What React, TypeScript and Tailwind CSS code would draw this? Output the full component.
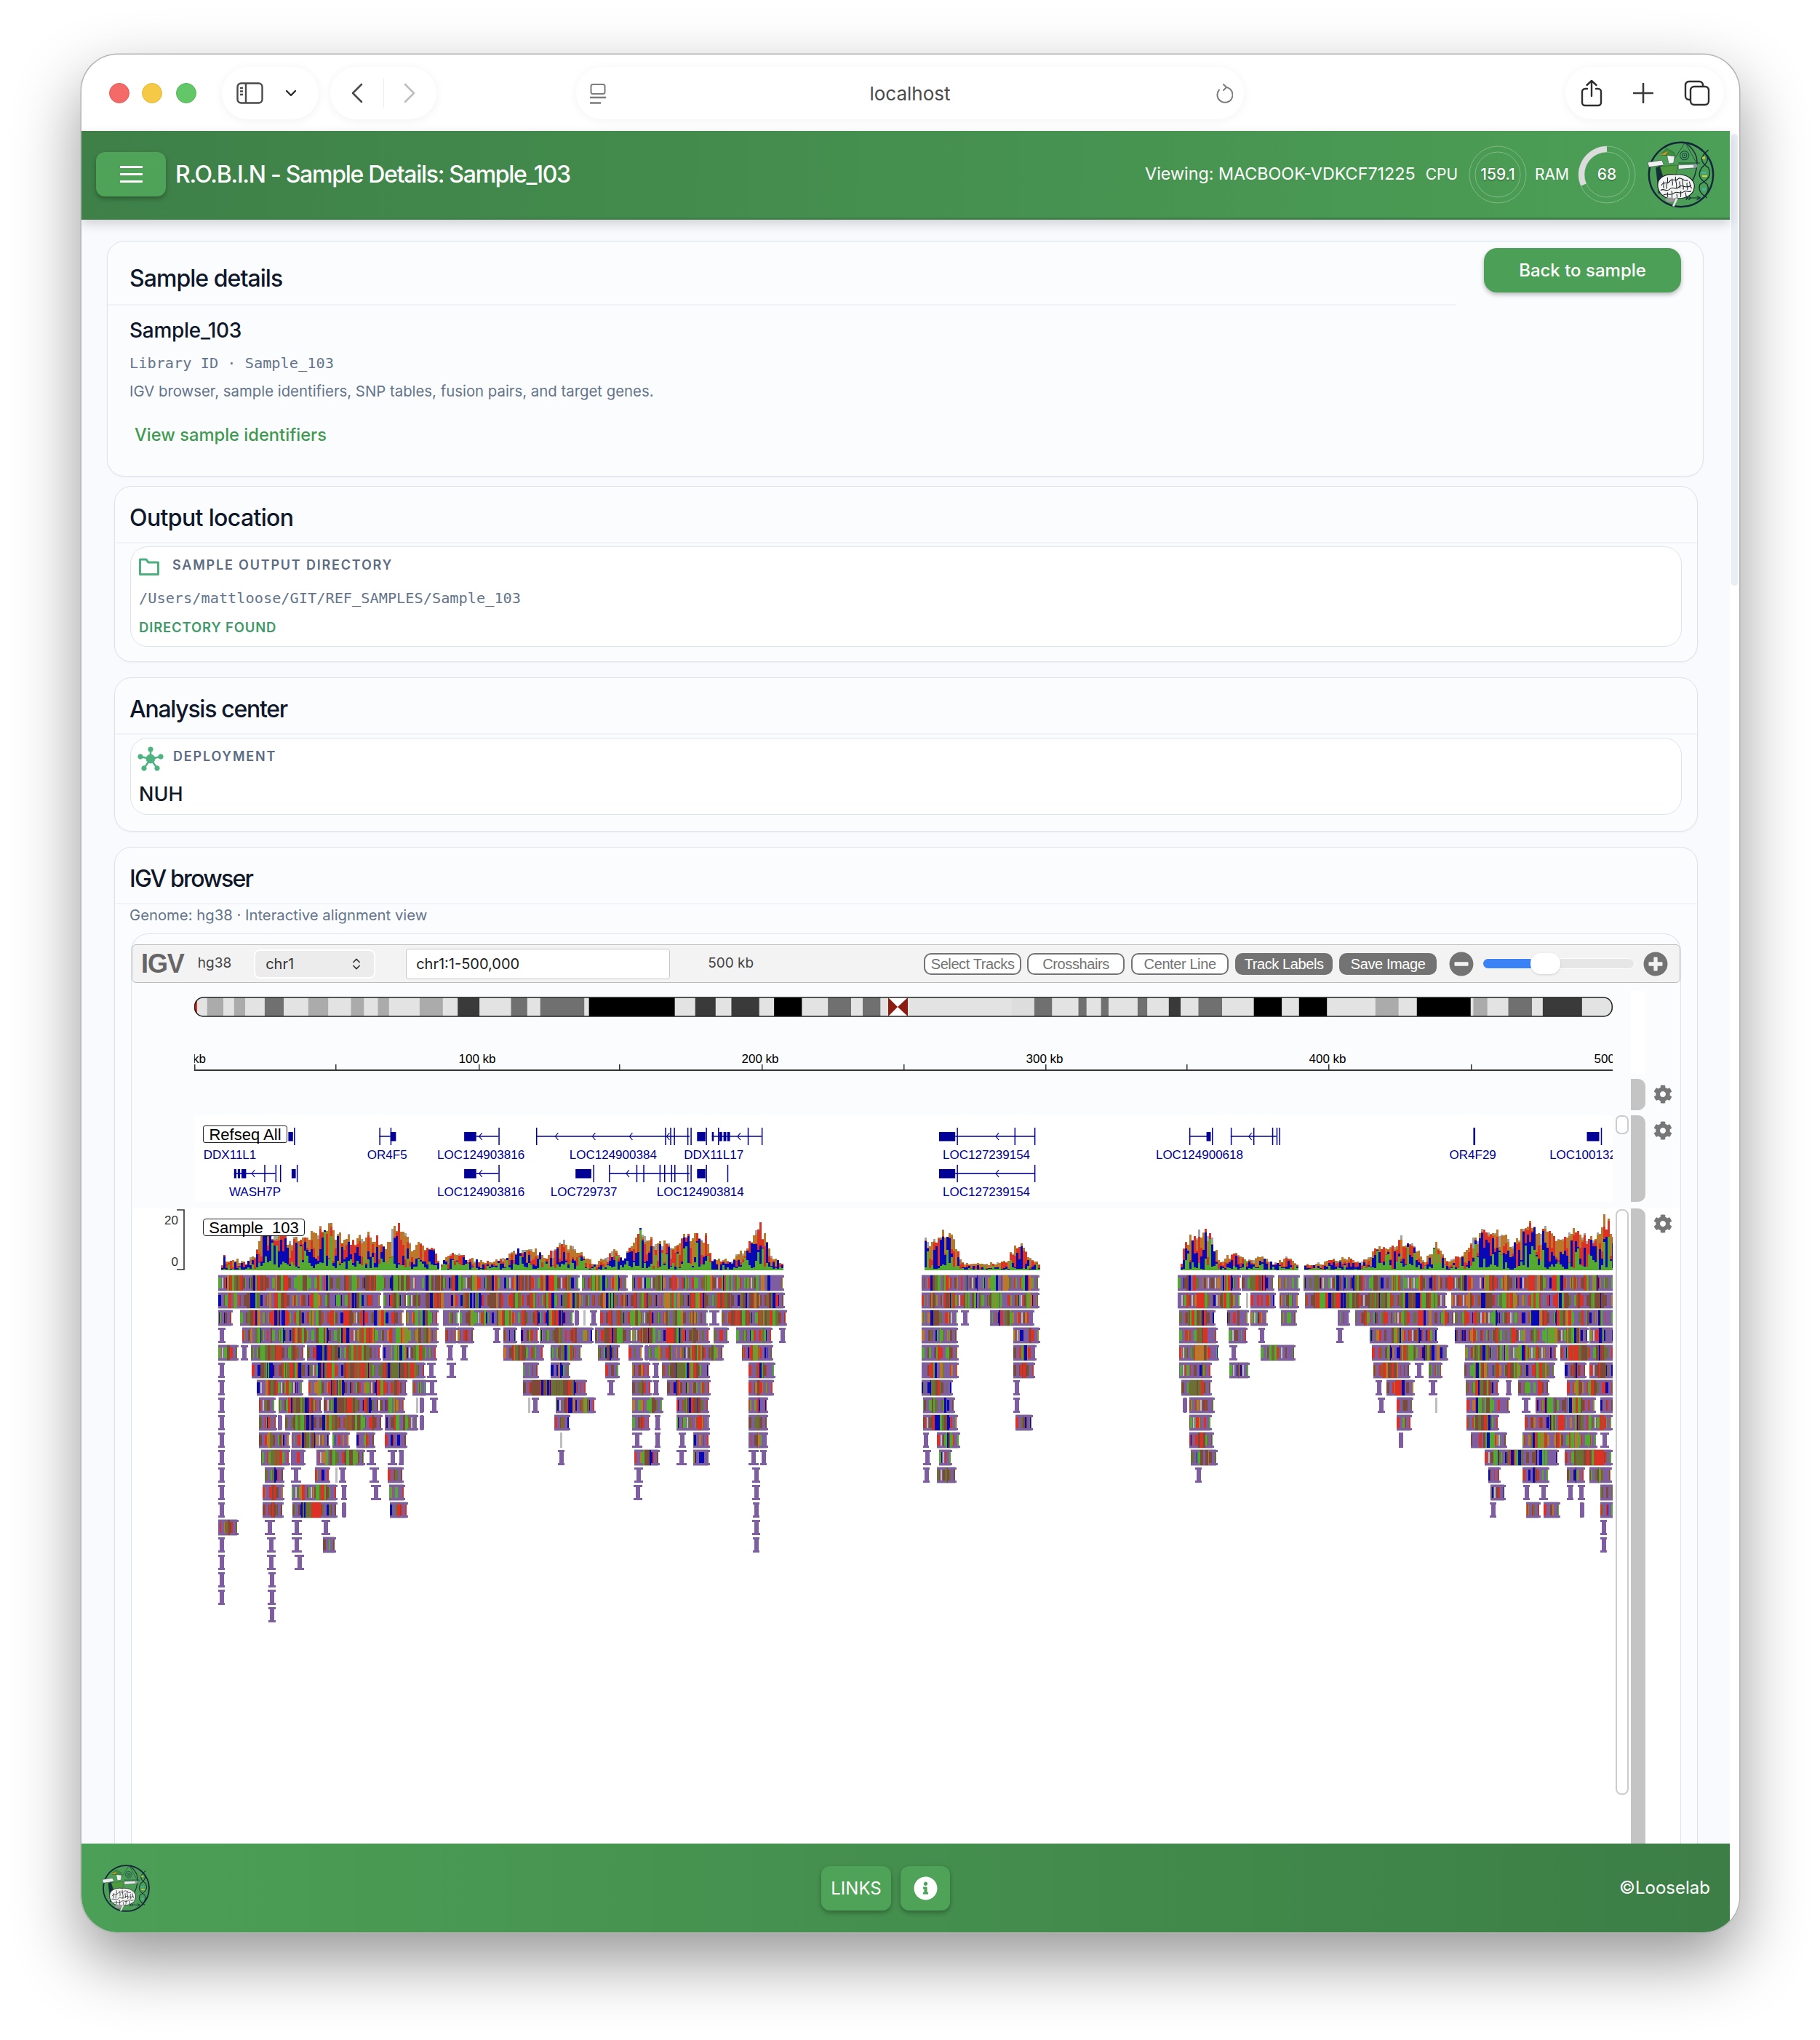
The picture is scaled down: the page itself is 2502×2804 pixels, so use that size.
import { ChevronsUpDown } from 'lucide-react'
import { FaCog, FaInfoCircle, FaMinusCircle, FaPlusCircle } from 'react-icons/fa'

// track svgs share one origin: x = page x - 181
const X0 = 181
const sans = "[font-family:'Liberation_Sans',Arial,sans-serif]"

const mulberry = (seed: number) => () => {
  seed |= 0
  seed = (seed + 0x6d2b79f5) | 0
  let t = Math.imul(seed ^ (seed >>> 15), 1 | seed)
  t = (t + Math.imul(t ^ (t >>> 7), 61 | t)) ^ t
  return ((t ^ (t >>> 14)) >>> 0) / 4294967296
}

const C = {
  red: '#dc3226',
  green: '#54aa30',
  blue: '#0808b4',
  orange: '#bb772a',
  brown: '#7c4a36',
  olive: '#6b7034',
  gray: '#a3a3a3',
  purple: '#7e5da0',
  edge: '#bdbdbd',
  white: '#ffffff',
}
type Col = keyof typeof C

// x positions below were read off crops, so keep the crop's scale here
const lx = (v: number) => 290 + v / 1.96
const rx = (v: number) => 1260 + v / 1.633

const leftRows: number[][] = [
  [20, 990, 1000, 1120, 1135, 1540],
  [20, 455, 465, 525, 530, 1543],
  [20, 55, 78, 515, 525, 610, 625, 665, 670, 975, 980, 990, 1003, 1010, 1022, 1040, 1048, 1335, 1343, 1370, 1375, 1548],
  [20, 40, 85, 610, 632, 660, 665, 705, 760, 780, 788, 822, 835, 880, 885, 1028, 1035, 1130, 1135, 1340, 1355, 1392, 1415, 1510, 1530, 1548],
  [20, 70, 80, 100, 108, 248, 258, 455, 462, 605, 635, 653, 672, 692, 788, 893, 915, 995, 1042, 1097, 1125, 1160, 1170, 1178, 1180, 1378, 1430, 1512],
  [20, 38, 110, 265, 265, 575, 583, 605, 635, 660, 840, 880, 915, 965, 1062, 1097, 1135, 1180, 1190, 1208, 1215, 1340, 1448, 1518],
  [20, 38, 123, 245, 262, 525, 543, 578, 583, 610, 840, 1010, 1068, 1088, 1135, 1183, 1190, 1208, 1228, 1342, 1448, 1513],
  [20, 38, 130, 170, 182, 295, 303, 450, 455, 520, 552, 558, 562, 572, 590, 612, 855, 860, 865, 883, 930, 1033, 1135, 1215, 1255, 1338, 1448, 1498],
  [20, 38, 130, 175, 180, 190, 200, 458, 468, 555, 565, 572, 925, 965, 1135, 1180, 1195, 1212, 1255, 1340, 1448, 1498],
  [20, 38, 130, 210, 218, 318, 328, 370, 392, 440, 468, 525, 940, 946, 1135, 1162, 1195, 1212, 1260, 1280, 1300, 1340, 1448, 1498],
  [20, 38, 135, 210, 215, 250, 285, 412, 420, 445, 477, 502, 505, 520, 935, 952, 1140, 1205, 1255, 1282, 1300, 1340, 1448, 1475, 1480, 1498],
  [20, 38, 145, 195, 215, 243, 280, 318, 335, 342, 345, 365, 428, 452, 477, 515, 1140, 1165, 1458, 1480],
  [20, 38, 140, 195, 218, 338, 350, 367, 432, 458, 480, 520, 1138, 1162, 1458, 1480],
  [20, 38, 140, 192, 220, 338, 355, 362, 482, 528, 1460, 1478],
  [20, 70, 145, 172, 218, 245, 298, 322, 1458, 1480],
  [20, 38, 150, 175, 218, 245, 302, 334, 1460, 1478],
  [20, 38, 150, 175, 225, 250],
  [20, 38, 155, 175],
  [20, 38, 152, 175],
  [155, 175],
]

const rightRows: number[][] = [
  [12, 272, 587, 725, 730, 800, 812, 858, 868, 1563],
  [12, 272, 587, 725, 740, 745, 750, 803, 815, 855, 872, 1188, 1200, 1563],
  [12, 90, 100, 118, 165, 262, 590, 668, 698, 743, 750, 785, 818, 850, 945, 970, 985, 1205, 1208, 1563],
  [12, 90, 218, 275, 590, 672, 700, 740, 768, 782, 942, 958, 1018, 1168, 1208, 1505, 1510, 1563],
  [12, 92, 218, 266, 590, 676, 702, 720, 772, 848, 1022, 1190, 1232, 1435, 1445, 1563],
  [12, 92, 218, 263, 590, 660, 702, 745, 1025, 1105, 1118, 1138, 1150, 1178, 1230, 1430, 1455, 1500, 1510, 1563],
  [12, 78, 218, 232, 595, 660, 1030, 1045, 1055, 1115, 1150, 1170, 1233, 1305, 1322, 1335, 1350, 1418, 1460, 1563],
  [15, 83, 218, 232, 600, 606, 612, 667, 1035, 1052, 1078, 1112, 1165, 1170, 1235, 1330, 1358, 1378, 1390, 1522, 1535, 1563],
  [15, 90, 222, 258, 612, 660, 1078, 1108, 1235, 1305, 1365, 1560],
  [15, 28, 45, 94, 612, 665, 1082, 1092, 1245, 1322, 1360, 1525, 1535, 1555],
  [15, 32, 50, 76, 615, 673, 1275, 1438, 1455, 1560],
  [15, 30, 45, 86, 625, 640, 1283, 1308, 1360, 1418, 1460, 1498, 1510, 1558],
  [1288, 1320, 1362, 1376, 1398, 1418, 1460, 1475, 1485, 1500, 1535, 1563],
  [1286, 1302, 1368, 1398, 1408, 1442, 1490, 1498, 1535, 1563],
  [1535, 1550],
  [1535, 1550],
]

// coverage outline, [crop x, crop y of the top]
const covLeft = [[28, 190], [30, 55], [35, 155], [60, 145], [90, 160], [115, 130], [140, 60], [180, 50], [210, 80], [240, 50], [280, 70], [310, 10], [340, 60], [380, 80], [430, 60], [470, 100], [490, 30], [510, 30], [540, 110], [565, 90], [600, 110], [612, 160]]
const covLeft2 = [[620, 165], [645, 120], [680, 140], [730, 155], [770, 150], [800, 130], [860, 100], [900, 140], [945, 70], [980, 120], [1000, 130], [1030, 165], [1080, 115], [1110, 150], [1150, 40], [1175, 80], [1205, 80], [1240, 105], [1270, 60], [1310, 70], [1335, 70], [1350, 150], [1400, 150], [1450, 90], [1468, 0], [1490, 70], [1510, 140], [1543, 165]]
const covMid = [[18, 60], [30, 110], [50, 70], [65, 50], [85, 100], [100, 175], [150, 175], [200, 165], [225, 85], [240, 125], [275, 180]]
const covRight = [[592, 180], [600, 100], [630, 50], [655, 60], [680, 170], [710, 125], [740, 165], [775, 140], [800, 175], [830, 150], [855, 180]]
const covRight2 = [[870, 185], [950, 155], [1000, 165], [1040, 100], [1060, 120], [1085, 75], [1125, 125], [1140, 165], [1165, 100], [1190, 170], [1235, 120], [1250, 75], [1295, 25], [1330, 100], [1370, 30], [1415, 40], [1445, 100], [1470, 40], [1500, 70], [1520, 70], [1545, 0], [1563, 70]]

const interp = (pts: number[][], x: number) => {
  for (let i = 1; i < pts.length; i++) {
    if (x <= pts[i][0]) {
      const [a, b] = pts[i - 1]
      const [c, d] = pts[i]
      return b + ((d - b) * (x - a)) / (c - a)
    }
  }
  return pts[pts.length - 1][1]
}

const buildTracks = () => {
  const rnd = mulberry(103)
  const paths: Record<string, string[]> = {}
  const rect = (col: Col, x: number, y: number, w: number, h: number) => {
    ;(paths[col] ||= []).push(`M${x - X0} ${y - 1662}h${w}v${h}h${-w}z`)
  }
  const caps: [Col, number, number, number, number][] = []

  const stripeCols: Col[] = ['red', 'green', 'blue', 'orange', 'brown', 'olive', 'purple', 'red', 'green', 'brown']
  const dimCols: Col[] = ['brown', 'olive', 'brown', 'red', 'olive', 'green', 'brown', 'blue', 'red']

  const beam = (x: number, y: number) => {
    caps.push(['purple', x - 6, y, 12, 3], ['purple', x - 6, y + 18, 12, 3], ['purple', x - 2, y, 4, 21])
  }

  const read = (x0: number, x1: number, y: number) => {
    x0 = Math.round(x0)
    x1 = Math.round(x1)
    const w = x1 - x0
    if (w < 4) {
      rect('edge', x0, y, Math.max(w, 3), 21)
      return
    }
    if (w < 15) {
      const c = x0 + Math.round(w / 2)
      const col = stripeCols[Math.floor(rnd() * stripeCols.length)]
      caps.push(['purple', x0, y, w, 3], ['purple', x0, y + 18, w, 3], ['purple', c - 3, y + 1, 6, 19], [col, c - 2, y, 4, 21])
      return
    }
    const dim = rnd() < 0.25
    const cols = dim ? dimCols : stripeCols
    let x = x0
    while (x < x1) {
      const s = Math.min(1 + Math.floor(rnd() * 4), x1 - x)
      rect(cols[Math.floor(rnd() * cols.length)], x, y, s, 21)
      x += s
    }
    let b = x0 + 6
    while (b < x1 - 3) {
      beam(b, y)
      if (rnd() < 0.18) caps.push(['edge', b - 1, y + 3, 2, 15])
      b += dim ? 26 + Math.floor(rnd() * 50) : 8 + Math.floor(rnd() * 30)
    }
    beam(x1 - 4, y)
    caps.push(['edge', x0, y - 1, w, 1], ['edge', x0, y + 21, w, 1])
  }

  leftRows.forEach((segs, r) => {
    const y = 1754 + r * 24
    for (let i = 0; i < segs.length; i += 2) read(lx(segs[i]), lx(segs[i + 1]), y)
  })
  rightRows.forEach((segs, r) => {
    const y = 1754 + r * 24
    for (let i = 0; i < segs.length; i += 2) read(rx(segs[i]), rx(segs[i + 1]), y)
  })

  const cube = () => {
    const v = rnd()
    return v * v * v
  }
  const cov = (pts: number[][], toX: (v: number) => number, scale: number, base: number) => {
    const a = Math.round(toX(pts[0][0]))
    const b = Math.round(toX(pts[pts.length - 1][0]))
    const k = toX(1) - toX(0)
    for (let x = a; x < b; x += 3) {
      const top = interp(pts, (x - toX(0)) / k)
      const h = Math.max(((base - top) / scale) * (0.85 + rnd() * 0.38), 7)
      const order: Col[] = ['green', 'blue', 'red', 'orange', 'gray']
      // one base tends to dominate a column
      const g = rnd()
      const wt = [0.1 + g * g * 0.7, cube() * 2.2, cube() * 1.7, cube() * 1.7, rnd() < 0.35 ? rnd() * 0.25 : 0]
      const sum = wt.reduce((p, c) => p + c, 0)
      let y = 1747
      order.forEach((col, i) => {
        const s = Math.round((h * wt[i]) / sum)
        if (s > 0) {
          y -= s
          rect(col, x, y, 3, s)
        }
      })
    }
  }
  cov(covLeft, lx, 2.8, 187)
  cov(covLeft2, lx, 2.8, 187)
  cov(covMid, rx, 3, 200)
  cov(covRight, rx, 3, 200)
  cov(covRight2, rx, 3, 200)

  caps.forEach(([col, x, y, w, h]) => rect(col, Math.round(x), y, w, h))
  return (['brown', 'olive', 'red', 'green', 'blue', 'orange', 'gray', 'purple', 'edge', 'white'] as Col[]).map((col) => ({
    col,
    d: (paths[col] || []).join(''),
  }))
}

const alignment = buildTracks()

// ideogram bands read from two crops with different scales
const ix1 = (v: number) => 170 + v / 1.568
const ix2 = (v: number) => 1200 + v / 1.352
const L = '#e3e3e3'
const M = '#ababab'
const D = '#707070'
const V = '#3a3a3a'
const K = '#000000'
const bands: [number, number, string][] = [
  ...([
    [152, 180, L], [180, 215, M], [215, 238, L], [238, 262, M], [262, 304, L], [304, 345, D], [345, 398, L], [398, 441, M], [441, 490, L], [490, 518, M],
    [518, 548, L], [548, 572, M], [572, 638, L], [638, 688, M], [688, 720, L], [720, 767, V], [767, 835, L], [835, 870, D], [870, 898, L], [898, 993, D],
    [993, 1003, L], [1003, 1188, K], [1188, 1232, L], [1232, 1276, V], [1276, 1310, L], [1310, 1370, V], [1370, 1402, L], [1402, 1462, K], [1462, 1518, L], [1518, 1568, D],
  ] as [number, number, string][]).map(([a, b, c]) => [ix1(a), ix1(b), c] as [number, number, string]),
  [1170, 1186, L],
  [1186, 1200, D],
  ...([
    [0, 14, D], [14, 28, L], [28, 65, '#ffffff'], [65, 258, L], [258, 300, '#dddddd'], [300, 333, D], [333, 382, L], [382, 397, D], [397, 424, L], [424, 438, D],
    [438, 492, L], [492, 510, D], [510, 550, L], [550, 572, V], [572, 605, L], [605, 649, D], [649, 708, L], [708, 760, K], [760, 792, L], [792, 844, K],
    [844, 934, L], [934, 977, M], [977, 1011, L], [1011, 1111, K], [1111, 1116, L], [1116, 1142, M], [1142, 1181, L], [1181, 1225, D], [1225, 1245, L], [1245, 1318, V], [1318, 1375, L],
  ] as [number, number, string][]).map(([a, b, c]) => [ix2(a), ix2(b), c] as [number, number, string]),
]

const ticks = [267, 461, 658, 851, 1047, 1242, 1437, 1631, 1826, 2022, 2217]
const rulerLabels: [string, number][] = [['0 kb', 267], ['100 kb', 656], ['200 kb', 1045], ['300 kb', 1436], ['400 kb', 1825], ['500 kb', 2217]]

type Gene = { y: number; line?: [number, number]; boxes?: [number, number][]; bars?: number[]; chev?: number[] }
const g1 = 1563
const g2 = 1614
const genes: Gene[] = [
  { y: g1, boxes: [[ix1(355), ix1(365)]], bars: [ix1(367)] },
  { y: g1, line: [ix1(551), ix1(575)], boxes: [[ix1(575), ix1(587)]], bars: [ix1(551), ix1(575)] },
  { y: g1, line: [ix1(760), ix1(808)], boxes: [[ix1(734), ix1(760)]], bars: [ix1(808)], chev: [ix1(768)] },
  { y: g1, line: [ix1(889), ix1(1220)], bars: [ix1(889), ix1(1167), ix1(1178), ix1(1186), ix1(1215), ix1(1222)], chev: [ix1(932), ix1(1012), ix1(1092), ix1(1172)] },
  { y: g1, boxes: [[ix1(1236), ix1(1254)]], bars: [ix1(1255)] },
  {
    y: g1,
    line: [ix1(1268), ix1(1375)],
    boxes: [[ix1(1268), ix1(1272)], [ix1(1284), ix1(1290)], [ix1(1293), ix1(1299)], [ix1(1301), ix1(1307)]],
    bars: [ix1(1281), ix1(1345), ix1(1375)],
    chev: [ix1(1325)],
  },
  { y: g2, line: [ix1(238), ix1(327)], boxes: [[ix1(238), ix1(243)], [ix1(246), ix1(251)], [ix1(254), ix1(264)]], bars: [ix1(303), ix1(327), ix1(337)], chev: [ix1(278)] },
  { y: g2, boxes: [[ix1(362), ix1(371)]], bars: [ix1(373)] },
  { y: g2, line: [ix1(760), ix1(808)], boxes: [[ix1(734), ix1(760)]], bars: [ix1(808)], chev: [ix1(768)] },
  { y: g2, boxes: [[ix1(974), ix1(1008)]], bars: [ix1(1012)] },
  { y: g2, line: [ix1(1046), ix1(1220)], bars: [ix1(1046), ix1(1105), ix1(1120), ix1(1155), ix1(1165), ix1(1180), ix1(1187), ix1(1215), ix1(1222)], chev: [ix1(1085)] },
  { y: g2, boxes: [[ix1(1236), ix1(1254)]], bars: [ix1(1255), ix1(1301)] },
  { y: g1, line: [ix2(153), ix2(300)], boxes: [[ix2(123), ix2(153)]], bars: [ix2(156), ix2(263), ix2(300)], chev: [ix2(230)] },
  { y: g2, line: [ix2(153), ix2(300)], boxes: [[ix2(123), ix2(153)]], bars: [ix2(156), ix2(300)], chev: [ix2(230)] },
  { y: g1, line: [ix2(588), ix2(625)], boxes: [[ix2(620), ix2(628)]], bars: [ix2(588), ix2(630)] },
  { y: g1, line: [ix2(665), ix2(750)], bars: [ix2(665), ix2(707), ix2(742), ix2(750), ix2(755)], chev: [ix2(700)] },
  { y: g1, bars: [ix2(1116), ix2(1117.5)] },
  { y: g1, boxes: [[ix2(1327), ix2(1350)]], bars: [ix2(1353)] },
]

const geneLabels: [string, number, number][] = [
  ['DDX11L1', ix1(229), 1588],
  ['OR4F5', ix1(568), 1588],
  ['LOC124903816', ix1(770), 1588],
  ['LOC124900384', ix1(1055), 1588],
  ['DDX11L17', ix1(1272), 1588],
  ['WASH7P', ix1(283), 1639],
  ['LOC124903816', ix1(770), 1639],
  ['LOC729737', ix1(992), 1639],
  ['LOC124903814', ix1(1243), 1639],
  ['LOC127239154', ix2(211), 1588],
  ['LOC127239154', ix2(211), 1639],
  ['LOC124900618', ix2(607), 1588],
  ['OR4F29', ix2(1115), 1588],
  ['LOC100132', 2130 + 46, 1588],
]

const Logo = ({ className }: { className: string }) => (
  <svg viewBox="0 0 100 100" className={className}>
    <circle cx="50" cy="50" r="47" fill="none" stroke="#14263a" strokeWidth="2.6" />
    <path d="M56 3 L39 29 M56 3 L72 32" stroke="#1d3a44" strokeWidth="0.8" fill="none" />
    <circle cx="55" cy="22" r="6.5" fill="none" stroke="#1d4a4a" strokeWidth="1.2" />
    <circle cx="55" cy="22" r="3.4" fill="none" stroke="#1d4a4a" strokeWidth="1.2" />
    <circle cx="55" cy="22" r="1.2" fill="#1d4a4a" />
    <path d="M56 3 Q76 18 73 36 Q72 50 66 60" fill="none" stroke="#1c2f3a" strokeWidth="1.6" />
    <path d="M13 40 L22 36 L26 76 L17 78 Z" fill="#16303a" />
    <path d="M19 38 L46 36 L42 52 L24 54 Z" fill="#4f9a3f" stroke="#245a30" strokeWidth="0.6" />
    <path d="M1 32 L22 29 L25 36 L3 39 Z" fill="#eef0f0" stroke="#27363c" strokeWidth="0.6" />
    <path d="M46 36 L71 35 L72 40 L46 42 Z" fill="#eef0f0" stroke="#27363c" strokeWidth="0.6" />
    <circle cx="71" cy="37" r="3" fill="#8d9a9a" />
    <path d="M46 33 L78 33" stroke="#14263a" strokeWidth="0.8" />
    <path d="M29 20 L41 22 L39 33 L32 34 Z" fill="#eef0ee" stroke="#27363c" strokeWidth="0.5" />
    <path d="M20 21 L29 12 L40 18 L41 23 Z" fill="#3f8b3f" stroke="#1f4f2c" strokeWidth="0.6" />
    <path d="M19 21 L31 16 L27 21 Z" fill="#ee8f1c" />
    <path d="M16 68 C14 54 28 48 42 50 C58 48 72 58 69 70 C68 80 56 85 46 85 C32 88 18 82 16 68 Z" fill="#f4f4f2" stroke="#141d24" strokeWidth="1.2" />
    <path d="M21 66 C25 58 30 66 34 59 C37 54 42 62 46 56 C50 52 54 62 60 58 M20 73 C26 69 28 77 34 71 C38 66 42 74 47 68 C52 63 56 72 65 66 M24 80 C30 76 34 82 40 77 C44 73 50 80 54 75 C58 72 60 77 65 74 M30 54 C32 62 27 66 29 71 M42 53 C41 60 45 64 43 70 M53 56 C50 62 55 66 53 72 M36 74 C38 78 36 80 37 84 M50 74 C48 78 51 80 49 83 M24 60 C26 64 23 68 25 70 M37 56 C36 60 39 62 37 66 M48 60 C47 64 50 66 48 70 M59 62 C57 66 61 68 59 72 M62 60 C64 64 62 68 66 70 M30 76 C31 79 29 81 31 83 M44 78 C43 80 45 82 44 84 M57 76 C56 78 58 80 57 82" fill="none" stroke="#141d24" strokeWidth="1.1" />
    <ellipse cx="34" cy="87" rx="7" ry="3.4" fill="#9a9a9a" />
    <path d="M42 84 L46 85 L40 97 L37 96 Z" fill="#e6e6e6" stroke="#27363c" strokeWidth="0.4" />
    <path d="M57 84 H77 M73 81 L78 84 L73 87 M57 81 L60 84 L57 87 M61 81 L64 84 L61 87" fill="none" stroke="#14263a" strokeWidth="1.1" />
    <path d="M79 12 C92 24 92 30 80 40 C74 50 76 56 88 64 C92 72 88 78 82 84" fill="none" stroke="#16303a" strokeWidth="1.5" />
    <path d="M90 14 C78 24 76 30 90 40 C94 50 92 56 78 64 C74 72 78 78 88 84" fill="none" stroke="#16303a" strokeWidth="1.5" />
    <rect x="81" y="24" width="4" height="3" fill="#d8cf3a" />
    <rect x="80" y="46" width="7" height="2.4" fill="#3fb9b0" />
    <rect x="81" y="51" width="7" height="2.4" fill="#d8cf3a" />
    <rect x="81" y="70" width="5" height="3" fill="#3fb9b0" />
  </svg>
)

const Card = ({ title, className, titleClass, children }: { title: string; className: string; titleClass: string; children: React.ReactNode }) => (
  <section className={`rounded-[24px] border-[1.5px] border-[#dde3ed] bg-[#fbfcfe] shadow-[0_1px_3px_rgba(15,23,42,0.05)] ${className}`}>
    <div className="flex h-[78px] items-center border-b-2 border-[#f0f3f8] pl-[20px] pt-[9px]">
      <h2 className={`text-[32px] font-medium text-[#0f172a] ${titleClass}`}>{title}</h2>
    </div>
    {children}
  </section>
)

const NavBtn = ({ on, className, children }: { on?: boolean; className: string; children: React.ReactNode }) => (
  <div
    className={`flex h-[30px] w-[134px] items-center justify-center rounded-[10px] border-2 border-[#737373] text-[20px] tracking-[-0.02em] ${sans} ${on ? 'bg-[#737373] text-white' : 'bg-white text-[#737373]'} ${className}`}
  >
    {children}
  </div>
)

const Gear = () => <FaCog className="mx-auto mt-[8px] h-[26px] w-[26px] text-[#777777]" />

export default function App() {
  return (
    <div className="relative h-[2804px] w-[2502px] overflow-hidden bg-white pl-[112px] pt-[75px] [font-family:Inter,sans-serif]">
      <div className="flex h-[2581px] w-[2279px] flex-col overflow-hidden rounded-[50px] bg-white shadow-[0_0_0_1.5px_#b4b4b4,0_38px_90px_rgba(0,0,0,0.42)]">
        {/* browser toolbar */}
        <div className="flex h-[105px] shrink-0 items-center pl-[38px]">
          <span className="h-[28px] w-[28px] rounded-full border border-[#e05a55] bg-[#f46a68]" />
          <span className="ml-[17px] h-[28px] w-[28px] rounded-full border border-[#e0b93a] bg-[#f5c945]" />
          <span className="ml-[19px] h-[28px] w-[28px] rounded-full border border-[#52b35c] bg-[#63c767]" />
          <div className="ml-[35px] flex h-[72px] w-[133px] items-center rounded-[36px] bg-white pl-[20px] shadow-[0_2px_14px_rgba(0,0,0,0.06)]">
            <svg viewBox="0 0 37 30" className="h-[30px] w-[37px]" fill="none" stroke="#4a4a4a" strokeWidth="2.4">
              <rect x="1.5" y="1.5" width="34" height="27" rx="5" />
              <path d="M13 2v26M5 8h4M5 12.5h4M5 17h4" />
            </svg>
            <svg viewBox="0 0 16 10" className="ml-[30px] h-[10px] w-[16px]" fill="none" stroke="#2b2b2b" strokeWidth="2.4" strokeLinecap="round" strokeLinejoin="round">
              <path d="M2 2l6 6 6-6" />
            </svg>
          </div>
          <div className="ml-[16px] flex h-[72px] w-[146px] items-center rounded-[36px] bg-white pl-[29px] shadow-[0_2px_14px_rgba(0,0,0,0.06)]">
            <svg viewBox="0 0 16 28" className="h-[28px] w-[16px]" fill="none" stroke="#4a4a4a" strokeWidth="2.6" strokeLinecap="round" strokeLinejoin="round">
              <path d="M14 2L2 14l12 12" />
            </svg>
            <span className="ml-[28px] h-[40px] w-px bg-[#ececec]" />
            <svg viewBox="0 0 16 28" className="ml-[27px] h-[28px] w-[16px]" fill="none" stroke="#bdbdbd" strokeWidth="2.6" strokeLinecap="round" strokeLinejoin="round">
              <path d="M2 2l12 12L2 26" />
            </svg>
          </div>
          <div className="relative ml-[192px] flex h-[72px] w-[918px] items-center justify-center rounded-[36px] bg-white pt-[2px] shadow-[0_2px_14px_rgba(0,0,0,0.05)]">
            <svg viewBox="0 0 22 28" className="absolute left-[19px] top-[23px] h-[28px] w-[22px]" fill="none" stroke="#7c7c7c" strokeWidth="2">
              <rect x="1.5" y="1" width="19" height="13" rx="2.5" />
              <path d="M0 19h22" strokeWidth="2.4" />
              <path d="M0 26.5h15" strokeWidth="2.4" />
            </svg>
            <span className="text-[26px] text-[#4a4a4a]">localhost</span>
            <svg viewBox="0 0 24 28" className="absolute right-[15px] top-[23px] h-[28px] w-[24px]" fill="none" stroke="#7c7c7c" strokeWidth="2" strokeLinecap="round" strokeLinejoin="round">
              <path d="M15 5A10.5 10.5 0 1 1 5 8.5" />
              <path d="M11 1l4 4-4 4" />
            </svg>
          </div>
          <div className="ml-[442px] flex h-[72px] w-[218px] items-center rounded-[36px] bg-white pl-[21px] shadow-[0_2px_14px_rgba(0,0,0,0.05)]">
            <svg viewBox="0 0 30 38" className="h-[38px] w-[30px]" fill="none" stroke="#2e2e2e" strokeWidth="2.4" strokeLinecap="round" strokeLinejoin="round">
              <path d="M9 13H6a4 4 0 0 0-4 4v15a4 4 0 0 0 4 4h18a4 4 0 0 0 4-4V17a4 4 0 0 0-4-4h-3" />
              <path d="M15 23V2M8.5 8L15 2l6.5 6" />
            </svg>
            <svg viewBox="0 0 28 28" className="ml-[42px] h-[28px] w-[28px]" fill="none" stroke="#3a3a3a" strokeWidth="2.6" strokeLinecap="round">
              <path d="M14 1v26M1 14h26" />
            </svg>
            <svg viewBox="0 0 36 36" className="ml-[42px] h-[36px] w-[36px]" fill="none" stroke="#2e2e2e" strokeWidth="2.4">
              <rect x="9" y="9" width="25" height="25" rx="5" />
              <path d="M9 27H7a5 5 0 0 1-5-5V7a5 5 0 0 1 5-5h14a5 5 0 0 1 5 5v2" />
            </svg>
          </div>
        </div>

        <div className="flex min-h-0 flex-1">
          <div className="flex min-w-0 w-[2266px] flex-col">
            {/* app header */}
            <header className="relative z-10 flex h-[122px] shrink-0 items-center border-b-[3px] border-[#3f7f49] bg-gradient-to-r from-[#3e8048] to-[#4c9f56] pl-[20px] pr-[20px] shadow-[0_6px_14px_rgba(0,0,0,0.16)]">
              <button className="flex h-[61px] w-[96px] items-center justify-center rounded-[12px] bg-[#4fa358] shadow-[0_3px_6px_rgba(0,0,0,0.3)]">
                <span className="flex w-[31px] flex-col gap-[7px]">
                  <i className="h-[3px] bg-white" />
                  <i className="h-[3px] bg-white" />
                  <i className="h-[3px] bg-white" />
                </span>
              </button>
              <h1 className="ml-[13px] text-[32px] font-medium tracking-[-0.04em] text-white">R.O.B.I.N - Sample Details: Sample_103</h1>
              <span className="ml-auto text-[23.3px] text-white">Viewing: MACBOOK-VDKCF71225</span>
              <span className="ml-[14px] text-[21px] text-white">CPU</span>
              <div className="relative ml-[15px] flex h-[80px] w-[80px] items-center justify-center">
                <svg viewBox="0 0 80 80" className="absolute inset-0" fill="none" stroke="#ffffff" strokeOpacity="0.3">
                  <circle cx="40" cy="40" r="39" />
                  <circle cx="40" cy="40" r="31" />
                </svg>
                <span className="text-[21px] font-medium text-white [text-shadow:0_1px_2px_rgba(0,0,0,0.4)]">159.1</span>
              </div>
              <span className="ml-[11px] text-[21px] text-white">RAM</span>
              <div className="relative ml-[12px] flex h-[80px] w-[80px] items-center justify-center">
                <svg viewBox="0 0 80 80" className="absolute inset-0" fill="none">
                  <circle cx="40" cy="40" r="39" stroke="#ffffff" strokeOpacity="0.3" />
                  <circle cx="40" cy="40" r="31" stroke="#ffffff" strokeOpacity="0.3" />
                  <path d="M40 5 A35 35 0 0 0 8 54" stroke="#dcdcdc" strokeWidth="8" />
                </svg>
                <span className="text-[21px] font-medium text-white [text-shadow:0_1px_2px_rgba(0,0,0,0.4)]">68</span>
              </div>
              <Logo className="ml-[15px] h-[94px] w-[94px]" />
            </header>

            <main className="min-h-0 flex-1 overflow-hidden bg-[#f8fafd] pt-[29px]">
              {/* sample details */}
              <section className="relative ml-[35px] h-[324px] w-[2195px] rounded-[24px] border-[1.5px] border-[#dde3ed] bg-[#fbfcfe] shadow-[0_1px_3px_rgba(15,23,42,0.05)]">
                <div className="flex h-[88px] w-[1853px] items-center border-b-2 border-[#f0f3f8] pl-[30px] pt-[16px]">
                  <h2 className="text-[32px] font-medium tracking-[-0.03em] text-[#0f172a]">Sample details</h2>
                </div>
                <button className="absolute right-[30px] top-[9px] h-[61px] w-[271px] rounded-[18px] bg-[#4c9f56] text-[24px] font-medium text-white shadow-[0_3px_6px_rgba(0,0,0,0.28)]">Back to sample</button>
                <div className="pl-[30px] pt-[13px]">
                  <div className="text-[28px] font-medium tracking-[-0.01em] text-[#0f172a]">Sample_103</div>
                  <div className="mt-[9px] text-[20.3px] text-[#64748b] [font-family:'DejaVu_Sans_Mono',monospace]">Library ID · Sample_103</div>
                  <div className="mt-[9px] text-[20.35px] text-[#64748b]">IGV browser, sample identifiers, SNP tables, fusion pairs, and target genes.</div>
                  <div className="ml-[7px] mt-[26px] text-[23.7px] font-medium text-[#3f9a50]">View sample identifiers</div>
                </div>
              </section>

              {/* output location */}
              <Card title="Output location" titleClass="tracking-[-0.02em]" className="ml-[45px] mt-[13px] h-[242px] w-[2177px]">
                <div className="mx-[21px] mt-[4px] h-[138px] rounded-[24px] border-[1.5px] border-[#dde3ed] bg-white pl-[11px] pt-[15px]">
                  <div className="flex items-start">
                    <svg viewBox="0 0 28 24" className="h-[24px] w-[28px]" fill="none" stroke="#4cb07f" strokeWidth="3" strokeLinejoin="round">
                      <path d="M1.5 6V22.5H26.5V6H13L10 2H1.5V6" />
                    </svg>
                    <span className="ml-[18px] text-[18px] font-semibold leading-[20px] tracking-[0.1em] text-[#5b6b84]">SAMPLE OUTPUT DIRECTORY</span>
                  </div>
                  <div className="mt-[19px] text-[20.3px] leading-[24px] text-[#64748b] [font-family:'DejaVu_Sans_Mono',monospace]">/Users/mattloose/GIT/REF_SAMPLES/Sample_103</div>
                  <div className="mt-[16px] text-[18.5px] font-semibold leading-[24px] tracking-[0.045em] text-[#3f9a6a]">DIRECTORY FOUND</div>
                </div>
              </Card>

              {/* analysis center */}
              <Card title="Analysis center" titleClass="tracking-[-0.04em]" className="ml-[45px] mt-[21px] h-[212px] w-[2177px]">
                <div className="mx-[21px] mt-[4px] h-[106px] rounded-[24px] border-[1.5px] border-[#dde3ed] bg-white pl-[9px] pt-[15px]">
                  <div className="flex items-start">
                    <svg viewBox="0 0 36 34" className="-mt-[4px] h-[34px] w-[36px]" fill="#4fb381" stroke="#4fb381">
                      <path d="M18 17L18 4M18 17L4 14M18 17L32 14M18 17L9 30M18 17L27 30" strokeWidth="2.5" />
                      <circle cx="18" cy="17" r="6" />
                      <circle cx="18" cy="4" r="3.2" />
                      <circle cx="4" cy="14" r="3.2" />
                      <circle cx="32" cy="14" r="3.2" />
                      <circle cx="9" cy="30" r="3.2" />
                      <circle cx="27" cy="30" r="3.2" />
                    </svg>
                    <span className="ml-[13px] text-[18px] font-semibold leading-[20px] tracking-[0.1em] text-[#5b6b84]">DEPLOYMENT</span>
                  </div>
                  <div className="ml-[2px] mt-[15px] text-[27px] font-medium leading-[34px] text-[#111827]">NUH</div>
                </div>
              </Card>

              {/* igv */}
              <Card title="IGV browser" titleClass="tracking-[-0.055em]" className="ml-[45px] mt-[21px] w-[2177px]">
                <div className="pl-[20px] pt-[2px] text-[20.3px] leading-[26px] text-[#64748b]">Genome: hg38 · Interactive alignment view</div>
                <div className="mx-[22px] mt-[12px] rounded-t-[24px] border-x-[1.5px] border-t-[1.5px] border-[#dde3ed] pt-[14px]">
                  <div className="flex h-[53px] items-center rounded-[6px] border-[1.5px] border-[#bcbcbc] bg-[#f3f3f3] pl-[12px]">
                    <span className={`text-[36px] font-bold leading-none tracking-[-0.03em] text-[#666666] ${sans}`}>IGV</span>
                    <span className="ml-[19px] text-[19px] text-[#444444]">hg38</span>
                    <div className="ml-[31px] flex h-[40px] w-[167px] items-center justify-between rounded-[8px] border-2 border-white bg-[#ececec] pl-[14px] pr-[14px] text-[20px] text-[#333333]">
                      chr1
                      <ChevronsUpDown className="h-[20px] w-[20px] text-[#333333]" />
                    </div>
                    <div className="ml-[42px] flex h-[42px] w-[363px] items-center rounded-[4px] border border-[#c8c8c8] bg-white pl-[13px] text-[20px] text-[#1a1a1a]">chr1:1-500,000</div>
                    <span className="ml-[52px] text-[19px] text-[#444444]">500 kb</span>
                    <NavBtn className="ml-[234px]">Select Tracks</NavBtn>
                    <NavBtn className="ml-[8px]">Crosshairs</NavBtn>
                    <NavBtn className="ml-[9px]">Center Line</NavBtn>
                    <NavBtn on className="ml-[9px]">Track Labels</NavBtn>
                    <NavBtn on className="ml-[9px]">Save Image</NavBtn>
                    <FaMinusCircle className="ml-[17px] h-[34px] w-[34px] text-[#737373]" />
                    <div className="relative ml-[12px] h-[15px] w-[209px] rounded-full border border-white bg-[#e6e6e6]">
                      <div className="h-full w-[70px] rounded-full bg-[#3b82f6]" />
                      <div className="absolute left-[65px] top-[-8px] h-[29px] w-[41px] rounded-[14px] bg-white shadow-[0_1px_3px_rgba(0,0,0,0.15)]" />
                    </div>
                    <FaPlusCircle className="ml-[12px] h-[34px] w-[34px] text-[#737373]" />
                  </div>

                  {/* ideogram + ruler */}
                  <div className="flex h-[125px]">
                    <svg width={2036} height={125} className="shrink-0">
                      <svg x={86} y={0} width={1950} height={125}>
                        <defs>
                          <clipPath id="chr">
                            <rect x={0} y={20} width={1950} height={26} rx={12} />
                          </clipPath>
                        </defs>
                        <g clipPath="url(#chr)">
                          {bands.map(([a, b, c], i) => (
                            <rect key={i} x={a - 267} y={20} width={b - a + 0.5} height={26} fill={c} />
                          ))}
                          <rect x={0} y={20} width={4} height={26} fill="#e03020" />
                          <path d="M954 20V46L967 33ZM981 20V46L967 33Z" fill="#8c1b10" />
                        </g>
                        <rect x={0.75} y={20} width={1948.5} height={26} rx={12} fill="none" stroke="#222222" strokeWidth={1.5} />
                        {rulerLabels.map(([t, x]) => (
                          <text key={t} x={x - 267} y={110} textAnchor="middle" fontSize={17} fontFamily="Liberation Sans, Arial, sans-serif" fill="#000000">{t}</text>
                        ))}
                        <rect x={0} y={119} width={1950} height={2} fill="#333333" />
                        {ticks.map((x) => (
                          <rect key={x} x={x - 267} y={112} width={1.5} height={8} fill="#333333" />
                        ))}
                      </svg>
                    </svg>
                    <div className="ml-[25px] mt-[11px] h-[114px] w-[20px] bg-white" />
                  </div>

                  {/* empty track */}
                  <div className="mt-[7px] flex h-[43px]">
                    <div className="w-[2061px] shrink-0" />
                    <div className="h-full w-[20px] rounded-r-[10px] bg-[#c4c4c4]" />
                    <div className="flex-1"><Gear /></div>
                  </div>

                  {/* refseq */}
                  <div className="mt-[7px] flex h-[119px]">
                    <div className="relative h-full w-[2036px] shrink-0">
                      <svg width={2036} height={119} className="block">
                        <rect x={86} y={0} width={1950} height={119} fill="#ffffff" />
                        {genes.map((g, i) => {
                          const y = g.y - 1534
                          return (
                            <g key={i} fill="#000096" stroke="none">
                              {g.line && <rect x={g.line[0] - X0} y={y - 1} width={g.line[1] - g.line[0]} height={1.6} />}
                              {g.boxes?.map(([a, b], j) => <rect key={j} x={a - X0} y={y - 6} width={b - a} height={12.5} />)}
                              {g.bars?.map((b, j) => <rect key={j} x={b - X0} y={y - 12} width={1.5} height={24} />)}
                              {g.chev?.map((c, j) => (
                                <path key={j} d={`M${c - X0 + 3} ${y - 5}l-4 5 4 5`} fill="none" stroke="#000096" strokeWidth={1.2} />
                              ))}
                            </g>
                          )
                        })}
                        {geneLabels.map(([t, x, y], i) => (
                          <text key={i} x={x - X0} y={y - 1534 + 6} textAnchor="middle" fontSize={17} fontFamily="Liberation Sans, Arial, sans-serif" fill="#000096">{t}</text>
                        ))}
                      </svg>
                      <span className={`absolute left-[98px] top-[14px] flex h-[24px] w-[116px] items-center justify-center rounded-[3px] border border-[#222222] bg-white text-[22px] text-black ${sans}`}>Refseq All</span>
                    </div>
                    <div className="ml-[4px] mt-[0px] h-[26px] w-[18px] rounded-[7px] border-2 border-[#cccccc] bg-white" />
                    <div className="ml-[3px] h-full w-[20px] rounded-r-[10px] bg-[#c4c4c4]" />
                    <div className="flex-1"><Gear /></div>
                  </div>

                  {/* alignments */}
                  <div className="mt-[9px] flex h-[960px] bg-white">
                    <div className="relative h-full w-[2036px] shrink-0">
                      <svg width={2036} height={960} className="block">
                        <text x={64} y={22} textAnchor="end" fontSize={17} fontFamily="Liberation Sans, Arial, sans-serif" fill="#333333">20</text>
                        <text x={64} y={79} textAnchor="end" fontSize={17} fontFamily="Liberation Sans, Arial, sans-serif" fill="#333333">0</text>
                        <path d="M62 2H72V84H62" fill="none" stroke="#333333" strokeWidth={1.6} />
                        <g className="blur-[0.4px]">
                          {alignment.map((p) => (
                            <path key={p.col} d={p.d} fill={C[p.col]} />
                          ))}
                        </g>
                      </svg>
                      <span className={`absolute left-[98px] top-[14px] flex h-[24px] w-[140px] items-center justify-center rounded-[4px] border border-[#222222] bg-white text-[22px] text-black ${sans}`}>Sample_103</span>
                    </div>
                    <div className="ml-[4px] mt-[1px] h-[805px] w-[18px] rounded-[8px] border-2 border-[#cccccc] bg-white" />
                    <div className="ml-[3px] h-full w-[20px] rounded-r-[10px] bg-[#c4c4c4]" />
                    <div className="flex-1"><Gear /></div>
                  </div>
                </div>
              </Card>
            </main>

            {/* footer */}
            <footer className="relative z-10 flex h-[122px] shrink-0 items-center bg-gradient-to-r from-[#4c9f56] to-[#3c7e46] pl-[28px] pr-[27px]">
              <Logo className="h-[67px] w-[67px]" />
              <div className="absolute left-[1017px] top-[31px] flex gap-[13px]">
                <button className="h-[61px] w-[96px] rounded-[12px] bg-[#4fa358] text-[24px] text-white shadow-[0_3px_6px_rgba(0,0,0,0.3)]">LINKS</button>
                <button className="flex h-[61px] w-[68px] items-center justify-center rounded-[12px] bg-[#4fa358] shadow-[0_3px_6px_rgba(0,0,0,0.3)]">
                  <FaInfoCircle className="h-[33px] w-[33px] text-white" />
                </button>
              </div>
              <span className="ml-auto text-[24px] text-white">©Looselab</span>
            </footer>
          </div>
          {/* page scrollbar */}
          <div className="flex-1 bg-white pl-[2px] pt-[4px]">
            <div className="h-[621px] w-[9px] rounded-full bg-[#e9edf6]" />
          </div>
        </div>
      </div>
    </div>
  )
}
